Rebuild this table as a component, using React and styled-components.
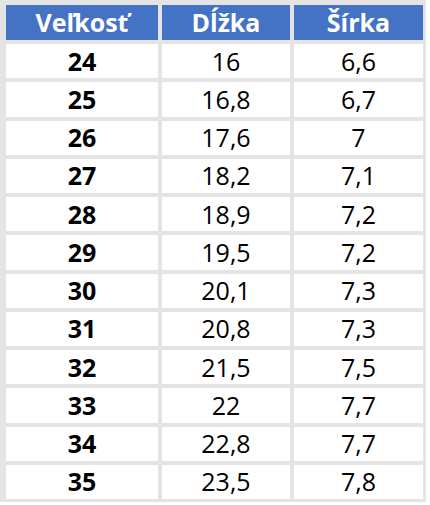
import styled, { createGlobalStyle } from 'styled-components';

const GlobalStyle = createGlobalStyle`
    html, body {
        margin:0;
        padding:0;
        background:#ffffff;
    }
`

const rows = [
    ['24', '16', '6,6'],
    ['25', '16,8', '6,7'],
    ['26', '17,6', '7'],
    ['27', '18,2', '7,1'],
    ['28', '18,9', '7,2'],
    ['29', '19,5', '7,2'],
    ['30', '20,1', '7,3'],
    ['31', '20,8', '7,3'],
    ['32', '21,5', '7,5'],
    ['33', '22', '7,7'],
    ['34', '22,8', '7,7'],
    ['35', '23,5', '7,8'],
]

export default function App () {
    return(
        <>
            <GlobalStyle/>
            <Table>
                <HeadCell>Veľkosť</HeadCell>
                <HeadCell>Dĺžka</HeadCell>
                <HeadCell>Šírka</HeadCell>
                {rows.map((row) => (
                    row.map((value, i) => (
                        <Cell key={row[0] + i} bold={i === 0}>{value}</Cell>
                    ))
                ))}
            </Table>
        </>
    )
}

const Table = styled.div`
    width:426px;
    box-sizing:border-box;
    margin-left:0;
    padding:5px 3px 3px 6px;
    background:#e4e4e4;
    display:grid;
    grid-template-columns:152px 128px 129px;
    grid-template-rows:35px repeat(12, 34.25px);
    column-gap:4px;
    row-gap:4px;
    font-family:"Open Sans", "Liberation Sans", sans-serif;
    font-size:25px;
`

const HeadCell = styled.div`
    background:#4472c4;
    color:#ffffff;
    font-weight:700;
    display:flex;
    align-items:center;
    justify-content:center;
    line-height:1;
`

const Cell = styled.div`
    background:#ffffff;
    color:#000000;
    font-weight:${(p) => (p.bold ? 700 : 400)};
    display:flex;
    align-items:center;
    justify-content:center;
    line-height:1;
`
